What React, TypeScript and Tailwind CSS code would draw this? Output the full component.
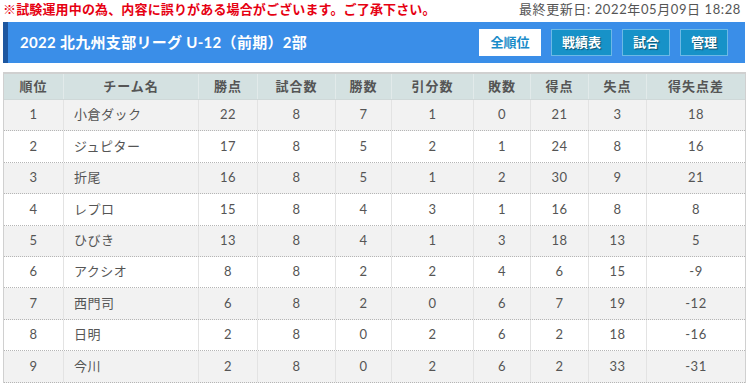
const COLS: { label: string; w: string; left?: boolean }[] = [
  { label: "順位", w: "w-[59px]" },
  { label: "チーム名", w: "w-[135px]", left: true },
  { label: "勝点", w: "w-[59px]" },
  { label: "試合数", w: "w-[78px]" },
  { label: "勝数", w: "w-[56px]" },
  { label: "引分数", w: "w-[82px]" },
  { label: "敗数", w: "w-[57px]" },
  { label: "得点", w: "w-[58px]" },
  { label: "失点", w: "w-[58px]" },
  { label: "得失点差", w: "flex-1" },
];

const ROWS: (string | number)[][] = [
  [1, "小倉ダック", 22, 8, 7, 1, 0, 21, 3, 18],
  [2, "ジュピター", 17, 8, 5, 2, 1, 24, 8, 16],
  [3, "折尾", 16, 8, 5, 1, 2, 30, 9, 21],
  [4, "レプロ", 15, 8, 4, 3, 1, 16, 8, 8],
  [5, "ひびき", 13, 8, 4, 1, 3, 18, 13, 5],
  [6, "アクシオ", 8, 8, 2, 2, 4, 6, 15, -9],
  [7, "西門司", 6, 8, 2, 0, 6, 7, 19, -12],
  [8, "日明", 2, 8, 0, 2, 6, 2, 18, -16],
  [9, "今川", 2, 8, 0, 2, 6, 2, 33, -31],
];

const BUTTONS = ["戦績表", "試合", "管理"];

export default function App() {
  return (
    <div className="w-[750px] h-[389px] overflow-hidden bg-white font-['Lato','Noto_Sans_CJK_JP',sans-serif]">
      <div className="flex items-center justify-between h-[19px] pl-[3px] pr-[9px]">
        <span className="text-[13px] font-bold text-[#e60012] tracking-[0.15px]">
          ※試験運用中の為、内容に誤りがある場合がございます。ご了承下さい。
        </span>
        <span className="text-[13px] text-[#555] tracking-[0.6px]">
          最終更新日: 2022年05月09日 18:28
        </span>
      </div>

      <div className="mt-[3px] ml-[3px] w-[742px] h-[41px] flex items-center justify-between bg-[#3a8ee8] border-l-[5px] border-[#1d57a0] pl-[12px] pr-[17px]">
        <h1 className="text-[15px] font-bold text-white tracking-[0.3px]">
          2022 北九州支部リーグ U-12（前期）2部
        </h1>
        <div className="flex gap-[10px]">
          <button className="h-[27px] w-[62px] bg-white text-[#1a8cc9] text-[13px] font-bold border border-white">
            全順位
          </button>
          {BUTTONS.map((b) => (
            <button
              key={b}
              className={`h-[27px] ${b.length === 3 ? "w-[61px]" : "w-[48px]"} bg-[#1792c8] text-white text-[13px] font-bold border border-[#6cb9e6] [text-shadow:1px_1px_1px_rgba(0,0,0,0.45)]`}
            >
              {b}
            </button>
          ))}
        </div>
      </div>

      <div className="mt-[9px] ml-[3px] w-[743px] border border-[#d0d0d0] border-t-2 border-b-0 text-[#555]">
        <div className="flex h-[26px] bg-[#d4e1e1] border-b border-[#cfd8d8]">
          {COLS.map((c, i) => (
            <div
              key={c.label}
              className={`${c.w} flex items-center justify-center text-[13px] font-bold tracking-[1px] ${
                i > 0 ? "border-l border-[#e2eaea]" : ""
              }`}
            >
              {c.label}
            </div>
          ))}
        </div>
        {ROWS.map((r, ri) => (
          <div
            key={ri}
            className={`flex h-[31.4px] border-b border-dotted border-[#b5b5b5] ${
              ri % 2 === 0 ? "bg-[#f2f2f2]" : "bg-white"
            }`}
          >
            {r.map((v, i) => (
              <div
                key={i}
                className={`${COLS[i].w} flex items-center text-[13px] tracking-[0.5px] ${
                  COLS[i].left ? "justify-start pl-[10px]" : "justify-center"
                } ${i > 0 ? "border-l border-[#e3e3e3]" : ""}`}
              >
                {v}
              </div>
            ))}
          </div>
        ))}
      </div>
    </div>
  );
}
